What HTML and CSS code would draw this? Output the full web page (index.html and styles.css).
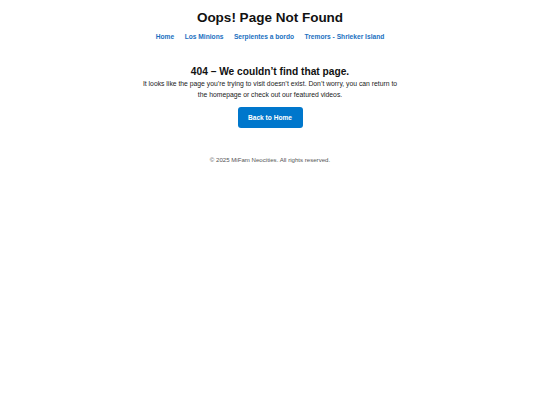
FILE: index.html
```html
<!DOCTYPE html>
<html>
<head>
<meta charset="utf-8">
<link rel="stylesheet" href="styles.css">
</head>
<body>
<header class="header">
  <h1 class="title">Oops! Page Not Found</h1>
  <nav class="nav">
    <a href="#">Home</a>
    <a href="#">Los Minions</a>
    <a href="#">Serpientes a bordo</a>
    <a href="#">Tremors - Shrieker Island</a>
  </nav>
</header>
<main class="main">
  <h2 class="heading">404 – We couldn’t find that page.</h2>
  <p class="text">It looks like the page you’re trying to visit doesn’t exist. Don’t worry, you can return to the homepage or check out our featured videos.</p>
  <a class="button" href="#">Back to Home</a>
</main>
<footer class="footer">© 2025 MiFam Neocities. All rights reserved.</footer>
</body>
</html>
```
FILE: styles.css
```css
html, body { margin: 0; padding: 0; background: #fff; }
body { font-family: "Liberation Sans", Arial, sans-serif; color: #111; }
.header { display: flex; flex-direction: column; align-items: center; padding-top: 9px; }
.title { margin: 0; font-size: 13.5px; font-weight: bold; line-height: 17px; }
.nav { display: flex; gap: 10.5px; margin-top: 6px; }
.nav a { color: #1a70bf; font-weight: bold; font-size: 6.65px; text-decoration: none; line-height: 10px; }
.main { display: flex; flex-direction: column; align-items: center; margin-top: 23px; }
.heading { margin: 0; font-size: 10.2px; font-weight: bold; line-height: 13px; }
.text { margin: 0; width: 262px; text-align: center; font-size: 6.8px; line-height: 11px; color: #222; }
.button { margin-top: 7px; background: #0077cc; color: #fff; font-weight: bold; font-size: 6.6px; text-decoration: none; width: 65px; height: 21px; display: flex; align-items: center; justify-content: center; border-radius: 3px; }
.footer { text-align: center; font-size: 6.1px; color: #555; margin-top: 28px; }
```
